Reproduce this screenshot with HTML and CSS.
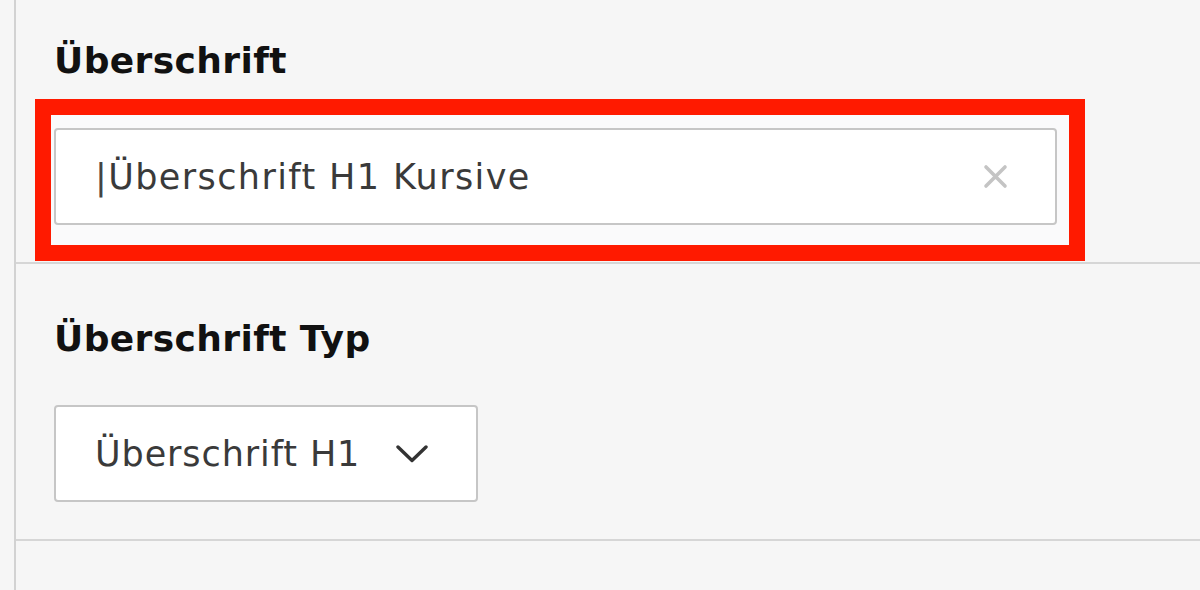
FILE: index.html
```html
<!DOCTYPE html>
<html lang="de">
<head>
<meta charset="utf-8">
<title>Überschrift</title>
<link rel="stylesheet" href="styles.css">
</head>
<body>
<div class="panel">
  <section class="field field-first">
    <label class="field-label">Überschrift</label>
    <div class="highlight">
      <div class="text-input">
        <span class="input-value"><span class="caret">|</span>Überschrift H1 Kursive</span>
        <svg class="clear-icon" width="25" height="25" viewBox="0 0 25 25" aria-hidden="true">
          <path d="M3 3 L22 22 M22 3 L3 22" stroke="#c4c4c4" stroke-width="3.6" stroke-linecap="round" fill="none"/>
        </svg>
      </div>
    </div>
  </section>
  <section class="field field-second">
    <label class="field-label">Überschrift Typ</label>
    <div class="select">
      <span class="select-value">Überschrift H1</span>
      <svg class="chevron" width="32" height="18" viewBox="0 0 32 18" aria-hidden="true">
        <path d="M2 2 L16 15.5 L30 2" stroke="#333" stroke-width="3.4" stroke-linecap="round" stroke-linejoin="round" fill="none"/>
      </svg>
    </div>
  </section>
  <section class="field field-third"></section>
</div>
</body>
</html>
```

FILE: styles.css
```css
html, body {
  margin: 0;
  padding: 0;
  background: #f6f6f6;
}

body {
  font-family: "DejaVu Sans", Verdana, sans-serif;
  width: 1200px;
  height: 590px;
  overflow: hidden;
}

.panel {
  margin-left: 14px;
  border-left: 2px solid #d2d2d2;
  height: 590px;
  display: flex;
  flex-direction: column;
}

.field {
  display: flex;
  flex-direction: column;
  align-items: flex-start;
  padding-left: 38px;
  border-bottom: 2px solid #d6d6d6;
}

.field-first {
  padding-top: 41px;
  padding-bottom: 1px;
}

.field-second {
  padding-top: 55px;
  padding-bottom: 37px;
}

.field-third {
  border-bottom: none;
  flex: 1;
}

.field-label {
  font-size: 36px;
  font-weight: bold;
  line-height: 40px;
  letter-spacing: 0.4px;
  color: #111;
  white-space: nowrap;
}

.field-first .field-label {
  margin-bottom: 18px;
}

.field-second .field-label {
  margin-bottom: 46px;
}

.highlight {
  margin-left: -19px;
  border: 16px solid #ff1a00;
  padding: 13px 12px 20px 3px;
  background: #fafafb;
}

.text-input {
  box-sizing: border-box;
  width: 1003px;
  height: 97px;
  border: 2px solid #c6c6c6;
  border-radius: 4px;
  background: #fff;
  display: flex;
  align-items: center;
  padding: 0 47px 0 39px;
}

.input-value {
  flex: 1;
  font-size: 35px;
  letter-spacing: 1.4px;
  color: #3a3a3a;
  white-space: nowrap;
}

.caret {
  color: #444;
}

.clear-icon {
  display: block;
  flex: none;
}

.select {
  box-sizing: border-box;
  width: 424px;
  height: 97px;
  border: 2px solid #c6c6c6;
  border-radius: 4px;
  background: #fff;
  display: flex;
  align-items: center;
  padding: 0 0 0 39px;
  gap: 36px;
}

.select-value {
  font-size: 35px;
  letter-spacing: 0.9px;
  color: #3a3a3a;
  white-space: nowrap;
}

.chevron {
  display: block;
  flex: none;
}
```
